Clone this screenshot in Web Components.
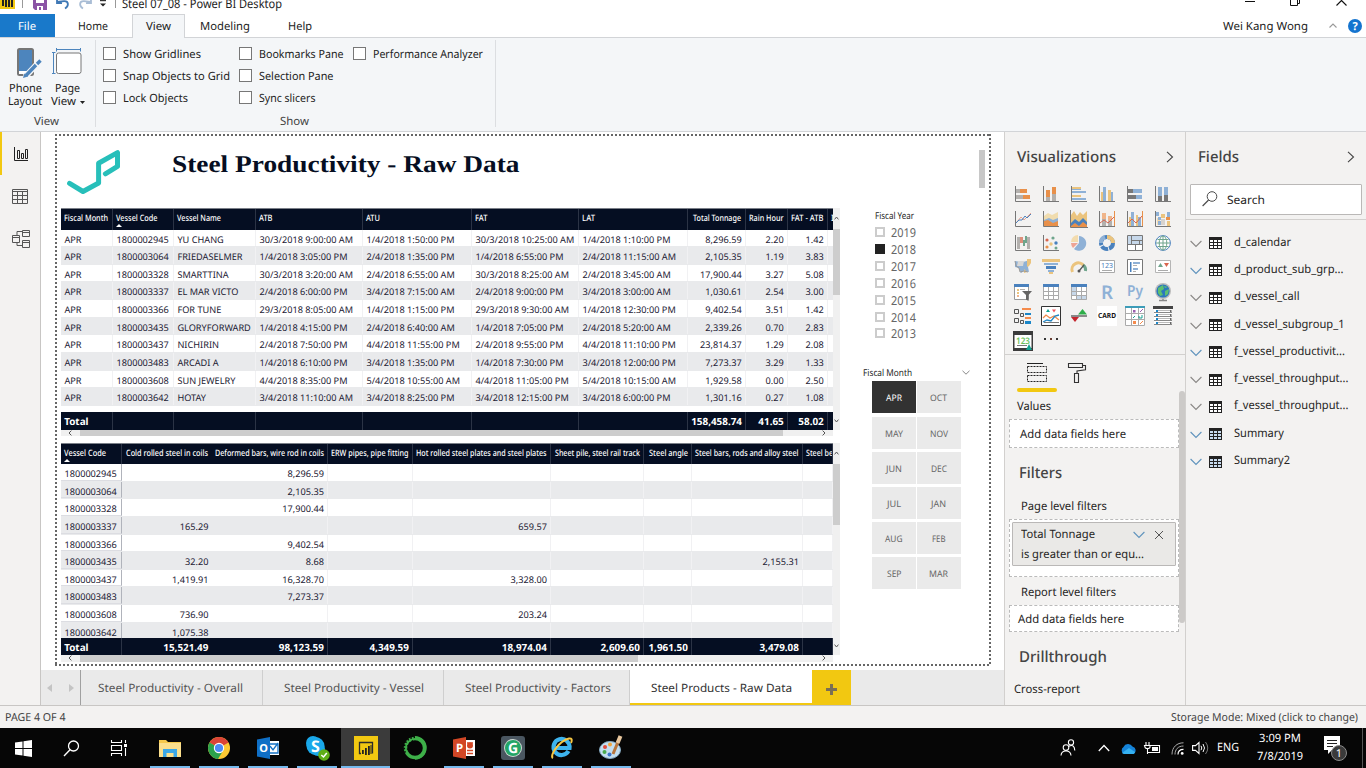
<!DOCTYPE html>
<html lang="en">
<head>
<meta charset="utf-8">
<title>Steel 07_08 - Power BI Desktop</title>
<style>
html,body{margin:0;padding:0}
body{width:1366px;height:768px;overflow:hidden;background:#fff;font:11.3px/16px "Noto Sans","Open Sans",sans-serif;color:#252423;text-rendering:geometricPrecision}
</style>
</head>
<body>
<pbi-app></pbi-app>
<script>
const R=(x,y,w,h,f)=>`<rect x="${x}" y="${y}" width="${w}" height="${h}" fill="${f}"/>`;
const P=(d,s,w=1,f='none')=>`<path d="${d}" stroke="${s}" stroke-width="${w}" fill="${f}"/>`;
const C=(x,y,r,f)=>`<circle cx="${x}" cy="${y}" r="${r}" fill="${f}"/>`;
const O='#e8904a',G='#b3b0ad',B='#8fb1d6',Y='#ebc47e',K='#777',D='#4a81bd';
const AX=P('M.5 0V15.5H16',K);
const ICONS={
 stackBar:[16,16,AX+R(1,3,4,4,G)+R(5,3,7,4,O)+R(1,9,7,4,G)+R(8,9,7,4,O)],
 stackCol:[16,16,AX+R(3,11,4,4,G)+R(3,4,4,7,O)+R(9,8,4,7,G)+R(9,1,4,7,O)],
 clusBar:[16,16,AX+R(1,1,9,2,Y)+R(1,3,9,1,B)+R(1,5,14,2,B)+R(1,9,9,2,Y)+R(1,12,14,2,B)],
 clusCol:[16,16,AX+R(2,6,2,9,Y)+R(4,1,3,14,B)+R(9,4,3,11,Y)+R(12,6,2,9,B)],
 hundBar:[16,16,AX+R(1,3,5,4,K)+R(6,3,9,4,B)+R(1,9,8,4,K)+R(9,9,6,4,B)],
 hundCol:[16,16,AX+R(3,1,4,9,B)+R(3,10,4,5,K)+R(9,1,4,8,B)+R(9,9,4,6,K)],
 line:[16,16,AX+P('M1 12L6 6L9 9L16 2','#e9a48f')+P('M1 12L4 9L7 9L10 5L12 7L16 3',D)],
 area:[16,16,`<path d="M1 5L5 2L9 4L15 1V15H1Z" fill="#f0dcae"/><path d="M1 9L6 7L10 9L15 7V15H1Z" fill="${B}"/><path d="M1 10L5 9L10 12L15 10V15H1Z" fill="${O}"/>`+AX],
 stackArea:[18,18,`<path d="M1 5L4 1L7 6L10 2L13 5L17 1V17H1Z" fill="${Y}"/><path d="M1 13L5 9L9 12L13 8L17 12V17H1Z" fill="${D}"/><path d="M1 16L5 13L9 16L13 12L17 15V17H1Z" fill="${O}"/>`+P('M.5 0V17.5H18',K)],
 lineStack:[16,16,AX+R(3,2,4,6,'#f0b58a')+R(3,8,4,7,G)+R(9,5,4,5,'#f0b58a')+R(9,10,4,5,G)+P('M1 12L5 9L9 12L15 6','#d9664f')+P('M15.5 0V15',O)],
 lineClus:[16,16,AX+R(2,6,2,9,Y)+R(4,1,3,14,B)+R(9,4,2,11,Y)+R(11,6,3,9,B)+P('M1 12L5 8L9 12L15 5','#d9664f')+P('M15.5 0V15',O)],
 ribbon:[16,16,AX+R(1,1,3,4,B)+R(6,3,4,4,Y)+R(12,1,3,5,B)+R(2,7,3,7,'#f2d9ae')+R(11,6,4,3,O)+R(6,8,4,6,'#d8d3cd')+R(3,6,3,3,B)+R(12,10,3,5,Y)+R(3,10,3,4,B)],
 waterfall:[16,16,AX+R(2,2,3,12,G)+R(5,2,3,6,'#dd8f7b')+R(8,5,2,6,'#6fa58c')+R(10,1,2,7,'#6fa58c')+R(12,2,3,12,G)],
 scatter:[16,16,AX+C(4,5,1.6,'#d9664f')+C(10,3,1.6,'#6fa58c')+C(8,9,1.7,Y)+C(13,8,1.7,D)+C(4,12,1.6,O)+C(13,13,1.5,'#6fa58c')],
 pie:[16,16,`<path d="M8 1A7.4 7.4 0 1 1 3 14L8 8Z" fill="${B}"/><path d="M7 0V7H0A7 7 0 0 1 7 0Z" fill="#f3dcae"/><path d="M0 8H7L2 13A8 8 0 0 1 0 8Z" fill="#eda495"/>`],
 donut:[16,16,`<circle cx="8" cy="8" r="6" fill="none" stroke="${D}" stroke-width="4" stroke-dasharray="7 1"/>`+P('M8 2A6 6 0 0 1 14 8',Y,4)+P('M2 8A6 6 0 0 1 6 2',B,4)],
 treemap:[16,16,R(.5,.5,15,15,'#fff')+R(1,1,14,8,'#c7d8ea')+P('M.5 .5H15.5V15.5H.5ZM.5 9.5H15.5M8.5 9.5V15.5M4.5 1V9M4.5 5.5H15M12.5 5.5V9',K)],
 globe:[16,16,`<circle cx="8" cy="8" r="7.4" fill="#fff" stroke="${D}"/>`+P('M8 1V15M1 8H15M2.5 4.5H13.5M2.5 11.5H13.5','#6fa58c')+`<ellipse cx="8" cy="8" rx="3.8" ry="7" fill="none" stroke="#6fa58c"/>`],
 filled:[18,16,`<path d="M1 2L9 3L16 1L14 8L15 13L10 12L7 14L5 9L1 8Z" fill="${B}"/><path d="M4 2h6l-1 5H3z" fill="#d8d8d8"/><path d="M13 0h4v4l-2 3-2 1zM10 10l3 3-3 1z" fill="${Y}"/>`+P('M1 2L2 7L5 9L6 13L10 12L14 13','#999')],
 funnel:[18,16,R(0,0,18,3,Y)+R(2,4,14,2,B)+R(4,7,10,3,D)+R(6,11,6,2,B)+R(7,13,4,2,Y)],
 gauge:[16,16,P('M1.5 13A6.5 6.5 0 0 1 13 7',Y,3)+P('M12 6A6 6 0 0 1 14.5 12','#6fa58c',3)+P('M8 12L13 6','#555',1.2)+C(8,12,1.5,'#555')],
 card123:[16,14,P('M.5 .5H15.5V12.5H.5Z','#a9a9a9',1,'#fff')+`<text x="8" y="8" font-size="7" text-anchor="middle" fill="${D}">123</text>`+P('M3 10.5H13','#aaa')],
 multi:[16,16,P('M.5 .5H15.5V15.5H.5Z',K,1,'#fff')+R(3,3,1.5,10,D)+R(6,3,7,2,B)+R(6,6,4,1,G)+R(6,9,5,2,B)+R(6,12,3,1,G)],
 kpi:[16,14,P('M.5 .5H15.5V12.5H.5Z','#b5b5b5',1,'#fff')+`<path d="M3 7L5.5 3L8 7Z" fill="#6fa58c"/><path d="M9 3H14L11.5 7Z" fill="#d9664f"/>`+P('M3 10.5H13','#aaa')],
 slicer:[18,18,R(0,2,15,15,'#fff')+P('M.5 2.5H14.5V16.5H.5Z','#999')+R(0,1,15,3,D)+R(3,6,2,2,Y)+R(3,9,2,2,Y)+R(3,12,2,2,'#f1b58c')+R(6,6,5,1,G)+`<path d="M8 8H18L14.5 12V18L12 16.5V12Z" fill="#666"/>`],
 table:[16,16,R(0,0,16,16,'#fff')+P('M.5 .5H15.5V15.5H.5ZM5.5 3V16M10.5 3V16M0 7.5H16M0 11.5H16','#aaa')+R(0,0,16,3,D)],
 matrix:[16,16,R(0,0,16,16,'#fff')+R(0,3,5,9,'#c7d8ea')+R(5,11,11,5,'#c7d8ea')+P('M.5 .5H15.5V15.5H.5ZM5.5 3V16M10.5 3V16M0 7.5H16M0 11.5H16','#aaa')+R(0,0,16,3,D)],
 rlang:[16,18,`<text x="8" y="15.5" font-size="19" font-weight="600" text-anchor="middle" textLength="12" lengthAdjust="spacingAndGlyphs" fill="${B}">R</text>`],
 py:[18,18,`<text x="9" y="13" font-size="15" font-weight="600" text-anchor="middle" textLength="16" lengthAdjust="spacingAndGlyphs" fill="${B}">Py</text>`],
 arcgis:[18,18,C(9,8,8,'#bbb')+C(9,8,6.6,'#2b78bd')+`<path d="M4 5L9 2L10 6L7 8L9 12L6 13L4 10ZM11 8L15 6L14 11L11 13ZM10 3L14 4L11 5Z" fill="#5cc070"/>`+P('M5 17.5H13M9 16V18','#888',1.5)],
 hier:[18,18,P('M.5 2.5H4.5V6.5H.5ZM6.5 6.5H9.5V9.5H6.5ZM.5 11.5H4.5V15.5H.5ZM6.5 13.5H9.5V16.5H6.5Z','#555')+R(8,1,9,2,'#f58b4c')+R(11,6,6,2,'#1a86c8')+R(11,10,6,2,'#f58b4c')+R(11,14,6,3,'#1a86c8')],
 spark:[20,20,P('M.5 .5H19.5V19.5H.5Z','#333',1,'#fff')+`<path d="M5 6L7 3L9 6Z" fill="#12a594"/><path d="M11 3.5H15L13 6.5Z" fill="#f2545b"/>`+P('M2 12L5 9L9 12L13 10L18 14','#f08a4b',1.2)+P('M2 16L6 14L10 15L14 10L18 9','#2186c4',1.3)+P('M3 16.5H18','#777')],
 updown:[18,14,`<path d="M8 5.5L12.5 0L17 5.5Z" fill="#2fae4a"/><path d="M1 8H9L5 13Z" fill="#c4262e"/>`+P('M1 7H17','#8a8a8a',2)],
 cardv:[20,20,R(0,0,20,20,'#fff')+`<text x="10" y="12.4" font-size="7" font-weight="700" text-anchor="middle" textLength="18" lengthAdjust="spacingAndGlyphs" fill="#111">CARD</text>`],
 gridv:[20,20,R(0,0,20,20,'#fff')+P('M.5 1V19.5H19.5V1M6.5 2V19M13.5 2V19M1 7.5H19M1 13.5H19','#aaa')+R(0,0,20,2,'#3c9cb8')+R(8,4,2.5,2.5,'#9b5fb0')+R(8,15,3,3,'#f58b4c')+P('M15 6L18 3','#9b5fb0')+P('M15 18L18 15','#f58b4c')+P('M8 12L10 10M14 10v2h3v-3','#17a091')],
 rowsv:[20,20,R(1,2,18,17,'#fff')+R(0,0,20,3,'#444')+[4,8,12,16].map(y=>P(`M1 ${y+2.5}H19`,'#888')+R(4,y,14,1,'#bbb')+R(3,y,2,2,'#1a86c8')+R(17,y,1.5,2,'#666')).join('')],
 num:[20,20,R(0,0,20,20,'#3b3b3b')+R(1.5,4,17,13,'#fff')+`<text x="10" y="12.5" font-size="9" font-weight="600" text-anchor="middle" textLength="14" lengthAdjust="spacingAndGlyphs" fill="#6abf5c">123</text>`+P('M4 14.5H14','#777')+`<path d="M13 19L16 13L19 19Z" fill="#14a08f"/>`],
 more:[16,8,R(1,1,2,2,'#333')+R(7,1,2,2,'#6b3f33')+R(13,1,2,2,'#333')],
 chevR:[8,12,P('M1 .8L6.5 6L1 11.2','#444',1.1)],
 chevD:[12,8,P('M.6 1L6 6.5L11.4 1','#8a8886',1.1)],
 chevB:[12,8,P('M.6 1L6 6.5L11.4 1','#5f93bd',1.1)],
 x:[10,10,P('M1 1L9 9M9 1L1 9','#555',1)],
 fieldsTab:[21,20,P('M0 .5H16','#222')+`<path d="M.5 3.5H19.5V9.5H.5ZM.5 12.5H19.5V18.5H.5Z" fill="none" stroke="#222" stroke-dasharray="2 1"/>`],
 roller:[19,21,P('M.5 .5H14.5V4.5H.5ZM14.5 2.5H17.5V6.8L9 8V10M6.5 10.5H10.5V19.5H6.5Z','#333',1.1)],
 search:[16,16,`<circle cx="10" cy="5.5" r="4.8" fill="none" stroke="#4a4a4a"/>`+P('M6.6 9L.6 15','#4a4a4a',1.1)],
 tbl:[13,13,R(0,1,13,12,'#222')+[1,5,9].map(x=>[4,7,10].map(y=>R(x,y,3,2,'#fff')).join('')).join('')],
 tblB:[13,13,R(0,1,13,12,'#222')+[1,5,9].map(x=>[4,7,10].map(y=>R(x,y,3,2,'#c9dcf0')).join('')).join('')],
 report:[15,15,P('M.5 0V13.5H14M3.5 3.5H5.5V11.5H3.5ZM7.5 6.5H9.5V11.5H7.5ZM11.5 2.5H13.5V11.5H11.5Z','#222')],
 data:[16,15,P('M.5 .5H15.5V14.5H.5ZM.5 2.5H15M.5 6.5H15M.5 10.5H15M5.5 3V14M10.5 3V14','#555')],
 model:[18,18,P('M.5 5.5H7.5V12.5H.5ZM.5 7.5H7M10.5 .5H17.5V6.5H10.5ZM10.5 2.5H17M10.5 10.5H17.5V17.5H10.5ZM10.5 12.5H17M5 5V1.5H10M5 13V15.5H10','#555')],
 phone:[26,30,`<rect x="2" y="1" width="15" height="26" rx="1.5" fill="#4d85bd" stroke="#767676" stroke-width="2"/>`+R(3,23,13,3,'#fff')+P('M9 29L22 15','#f4f6f8',6)+P('M10 27.5L20 17','#4d85bd',3.4)+P('M21 16L24.5 12.5','#4d85bd',3.4)+`<path d="M7 30L8.4 25.5L12 28.5Z" fill="#4d85bd"/>`],
 page:[30,27,P('M4.5 1.5H28.5M4.5 0V3.5M28.5 0V3.5M1.5 4.5V25.5M0 4.5H3.5M0 25.5H3.5','#4d85bd')+`<rect x="4.5" y="5" width="24.5" height="20.5" rx="2" fill="#fff" stroke="#767676"/>`],
 logo:[54,46,`<path d="M2.6 34.4L16 42.5L31.6 34V14.2L50.5 3.6V17.4L38.4 24.8" fill="none" stroke="#27bfba" stroke-width="5" stroke-linecap="round" stroke-linejoin="round"/>`],
 win:[17,17,`<path d="M0 2.5L7.5 1.5V8H0ZM8.5 1.3L17 0V8H8.5ZM0 9H7.5V15.5L0 14.5ZM8.5 9H17V17L8.5 15.7Z" fill="#fff"/>`],
 tsearch:[17,17,`<circle cx="10.5" cy="6" r="5" fill="none" stroke="#fff" stroke-width="1.3"/>`+P('M7 9.7L1 16','#fff',1.4)],
 taskview:[16,16,P('M.5 0V2.5H10.5V0M.5 16V13.5H10.5V16M.5 5.5H10.5V10.5H.5ZM14.5 0V3M14.5 8V16','#fff',1.1)+R(13,4,3,3,'#fff')],
 explorer:[22,18,`<path d="M0 1H7L9 3H22V18H0Z" fill="#f5c84c"/>`+R(0,4,22,14,'#fbdf8c')+`<path d="M4 18V10H18V18H14.5V14H7.5V18Z" fill="#3ba7e6"/>`],
 chrome:[22,22,C(11,11,11,'#fcc934')+`<path d="M11 11L1.5 5.5A11 11 0 0 1 20.5 5.5Z" fill="#db4437"/><path d="M11 11L1.5 5.5A11 11 0 0 0 10 22L15.5 13Z" fill="#2ba24c"/><path d="M11 5.5H20.5L19 4Z" fill="#db4437"/>`+C(11,11,5.2,'#fff')+C(11,11,4.1,'#4c8bf5')],
 outlook:[22,22,R(11,4,11,14,'#fff')+P('M12 7H21V16H12ZM13 9L16 13L21 6','#1572c4',1.3)+`<path d="M0 2.5L13 0V22L0 19.5Z" fill="#0f6fc6"/><text x="6.5" y="15" font-size="11" font-weight="700" text-anchor="middle" fill="#fff">O</text>`],
 skype:[24,26,C(8,8,7,'#1aa8ea')+C(13,14,7,'#1aa8ea')+C(10.5,11,9,'#1aa8ea')+`<text x="10.5" y="16.7" font-size="16" font-weight="700" text-anchor="middle" fill="#fff">S</text>`+C(19,20,5.8,'#5fae16')+P('M16.3 20L18.5 22L21.8 18','#fff',1.5)],
 pbi:[24,24,R(0,0,24,24,'#f2c811')+P('M7 17.5H5.5V6.5H18.5V17.5','#2b2b2b',1.3)+R(8,14,1.8,4,'#222')+R(11,12,1.8,7,'#222')+R(14,10,1.8,9,'#222')+R(16.5,9,1,9,'#222')],
 anaconda:[24,24,`<circle cx="12" cy="12" r="9.5" fill="none" stroke="#3eb049" stroke-width="3.4"/><path d="M12 1.3A10.7 10.7 0 0 0 2.5 17" fill="none" stroke="#060606" stroke-width="1.6" stroke-dasharray="1.5 1.8"/><path d="M10 4.5A8 8 0 0 0 4.5 14" fill="none" stroke="#060606" stroke-width="1" stroke-dasharray="1.5 2"/>`+P('M12 .8A11 11 0 0 1 23 12A11 11 0 0 1 12 23','#3eb049',1.4)],
 ppt:[22,22,R(10,3,12,16,'#fff')+P('M14 6H20M14 13.5H20M14 16.5H20','#d24726',1.3)+C(17,8.5,3,'#d24726')+`<path d="M0 2.5L13 0V22L0 19.5Z" fill="#d24726"/><text x="6.5" y="15.3" font-size="11.5" font-weight="700" text-anchor="middle" fill="#fff">P</text>`],
 gram:[24,24,`<rect width="24" height="24" rx="3" fill="#4a5660"/>`+C(12,12,9,'#cfd8d3')+C(12,12,8,'#23a566')+`<text x="12" y="17" font-size="14" font-weight="700" text-anchor="middle" fill="#fff">G</text>`],
 ie:[24,24,P('M18.5 15A8 8 0 1 1 19.5 12H6','#3db4ee',4.2)+P('M3 22C-1 20 9 5 19 2.5C22.5 1.8 22 5 21 7','#f6c744',2)],
 paint:[24,26,`<ellipse cx="11" cy="15" rx="10.5" ry="8.5" fill="#c4dff0" stroke="#86aac2"/>`+C(6,12,2,'#e14b3c')+C(11,9.5,2,'#f2a53c')+C(5.5,17,2,'#4aab4c')+C(10.5,19.5,2,'#3c75c9')+P('M14 19L19 7','#b9763d',3)+P('M18.6 8L21.5 1','#e8c79e',4)],
 people:[16,18,`<circle cx="11" cy="3.4" r="2.6" fill="none" stroke="#fff" stroke-width="1.1"/><circle cx="6" cy="8.6" r="2.8" fill="none" stroke="#fff" stroke-width="1.1"/>`+P('M1 16.5C1.5 10.5 10.5 10.5 11 16.5M9 7.2C13 5 14.5 8 14.8 11.5','#fff',1.1)],
 up:[12,8,P('M.8 7L6 1.5L11.2 7','#fff',1.3)],
 cloud:[17,11,`<path d="M4 11A4 4 0 0 1 3.5 4A5 5 0 0 1 12.5 3.5A4 4 0 0 1 13.5 11Z" fill="#1583d8"/><path d="M2 10L9 5L15 9A2 2 0 0 1 13.5 11H4Z" fill="#35b1f1"/>`],
 batt:[17,12,P('M6.5 3.5H15.5V10.5H4M2 0V3M5 0V3M.5 3.5H6V5C6 7 1 7 1 5ZM3.5 7V12','#fff',1.1)+R(8,5,6,4,'#fff')],
 wifi:[13,13,P('M1 12.5C1 5 6 .8 12.5 .8M4 12.5C4 7.5 7 4 12.5 4','#aaa')+P('M7 12.5C7 9.5 9 7.3 12.5 7.3','#fff',1.2)+C(11.2,11.4,1.4,'#fff')],
 vol:[17,14,P('M.6 4.6H3.5L7 1.5V12.5L3.5 9.4H.6Z','#fff',1.1)+P('M9 4.8Q10.6 7 9 9.2M11 3Q14 7 11 11','#fff')+P('M13.5 1Q18 7 13.5 13','#777')],
 note:[25,25,`<path d="M1 0H17V14H9L5 18V14H1Z" fill="#fff"/>`+P('M4 4.5H14M4 7.5H14M4 10.5H10','#222')+`<circle cx="16" cy="17" r="7.5" fill="#3a3a3a" stroke="#8a8a8a"/><text x="16" y="21" font-size="11" text-anchor="middle" fill="#fff">1</text>`],
 save:[14,10,`<path d="M0 -3H14V10H2L0 8Z" fill="#8b53a5"/>`+R(3,-3,8,6,'#fff')+R(4,6,6,4,'#fff')+R(6,7,2,3,'#8b53a5')],
 undo:[14,9,P('M1 2L8 1.2C13 1 13 6 9 8.4M1 -2V3.2H6','#3f78b5',1.8)],
 redo:[14,9,P('M13 2L6 1.2C1 1 1 6 5 8.4M13 -2V3.2H8','#a9bdd5',1.8)],
 down:[8,7,R(1,0,6,1.2,'#333')+`<path d="M1 3.5H7L4 6.5Z" fill="#222"/>`],
 caret:[5,3,`<path d="M0 0H5L2.5 3Z" fill="#222"/>`],
 help:[14,14,C(7,7,7,'#1474cf')+`<text x="7" y="11" font-size="11" font-weight="700" text-anchor="middle" fill="#fff">?</text>`],
 upS:[8,5,P('M.5 4.5L4 1L7.5 4.5','#999',1.1)],
 min:[10,4,P('M0 .5H10','#111')],
 max:[11,6,P('M.5 0V5.5H7.5V0M9.5 0V3.5H8','#111')],
 close:[11,6,P('M5.5 .5L.5 5.5M5.5 .5L10.5 5.5','#111',1.1)],
 sL:[4,6,P('M3.4 .6L1 3L3.4 5.4','#555')],sR:[4,6,P('M.6 .6L3 3L.6 5.4','#555')],
 sU:[5,4,P('M.6 3.4L2.5 1L4.4 3.4','#555')],sD:[5,4,P('M.6 .6L2.5 3L4.4 .6','#555')],
 pL:[5,8,`<path d="M5 0V8L0 4Z" fill="#c4c4c4"/>`],pR:[5,8,`<path d="M0 0V8L5 4Z" fill="#c4c4c4"/>`],
 chevS:[8,5,P('M.5 .8L4 4.2L7.5 .8','#888')],
 plus:[11,11,P('M5.5 0V11M0 5.5H11','#7a6f55',3)]
};
class UiIcon extends HTMLElement{connectedCallback(){
 if(this.shadowRoot)return;const [w,h,s]=ICONS[this.getAttribute('name')];
 this.attachShadow({mode:'open'}).innerHTML=`<style>:host{display:inline-block;flex:none;width:${w}px;height:${h}px}svg{display:block;overflow:visible}</style><svg width="${w}" height="${h}" viewBox="0 0 ${w} ${h}">${s}</svg>`}}
/* Text run condensed or expanded to the width given by w; --dy nudges its baseline */
class FitText extends HTMLElement{connectedCallback(){
 if(this.shadowRoot)return;const w=+this.getAttribute('w');
 this.attachShadow({mode:'open'}).innerHTML=`<style>:host{display:block;flex:none;width:${w}px;white-space:pre}span{display:inline-block;transform-origin:0 50%}</style><span><slot></slot></span>`;
 const s=this.shadowRoot.querySelector('span');s.style.transform=`translateY(var(--dy,1px)) scaleX(${w/s.getBoundingClientRect().width})`}}
const def=(n,css,html)=>customElements.define(n,class extends HTMLElement{connectedCallback(){
 if(this.shadowRoot)return;this.attachShadow({mode:'open'}).innerHTML=`<style>*{box-sizing:border-box}${css}</style>`+(typeof html==='function'?html(this):html)}});
const T=(w,t,c='')=>`<fit-text w="${w}" class="${c}">${t}</fit-text>`;
const I=(n,c='')=>`<ui-icon name="${n}" class="${c}"></ui-icon>`;

def('title-bar',`:host{display:flex;height:14px;overflow:hidden;align-items:flex-start;color:#222}
.pb{width:15px;height:9px;background:#f2c811;display:flex;align-items:flex-start;gap:1px;padding-left:2px}.pb i{width:2px;background:#222}
.sep{width:1px;height:8px;background:#999;flex:none}.t{margin:-5px 0 0 6px;font-size:12px}.sp{flex:1}
ui-icon[name=save]{margin-left:10px}ui-icon[name=undo]{margin-left:9px}ui-icon[name=redo]{margin-left:8px}ui-icon[name=down]{margin-left:7px}ui-icon[name=min]{margin:1px 35px 0 0}ui-icon[name=max]{margin-right:35px}ui-icon[name=close]{margin-right:19px}`,
`<div class="pb"><i style="height:6px"></i><i style="height:7px"></i><i style="height:7px"></i><i style="height:7px"></i></div><div class="sep" style="margin-left:7px"></div>${I('save')}${I('undo')}${I('redo')}${I('down')}<div class="sep" style="margin-left:8px"></div>${T(160,'Steel 07_08 - Power BI Desktop','t')}<div class="sp"></div>${I('min')}${I('max')}${I('close')}`);

def('menu-bar',`:host{display:flex;height:24px;border-bottom:1px solid #d2d4d7;color:#222;line-height:24px;box-sizing:border-box}
.f{width:55px;height:23px;background:#1979ca;color:#fff;padding-left:18px}.h{margin:0 24px 0 23px}
.v{width:53px;height:24px;border:1px solid #d2d4d7;border-bottom:0;background:#f4f6f8;padding-left:13px;line-height:22px}.m{margin-left:15px}.l{margin-left:38px}.sp{flex:1}
ui-icon{align-self:center}.u{margin-left:21px}.q{margin:0 4px 0 11px}`,
`<div class="f">${T(18,'File')}</div>${T(30,'Home','h')}<div class="v">${T(25,'View')}</div>${T(50,'Modeling','m')}${T(24,'Help','l')}<div class="sp"></div>${T(85,'Wei Kang Wong')}${I('upS','u')}${I('help','q')}`);

def('check-item',`:host{display:flex;gap:7px;height:22px;align-items:center;line-height:22px}i{width:13px;height:13px;border:1px solid #777;background:#fff;flex:none;margin-bottom:2px}`,()=>`<i></i><slot></slot>`);
const K2=(w,t)=>`<check-item>${T(w,t)}</check-item>`;
def('ribbon-bar',`:host{display:flex;height:94px;background:#f4f6f8;border-bottom:1px solid #d2d4d7;color:#222;box-sizing:border-box}
.g{border-right:1px solid #dcdee1;margin:2px 0 4px;height:87px;display:flex;flex-direction:column;align-items:center}
.a{width:96px}.b{width:400px;padding-left:7px;align-items:stretch}.bt{display:flex;height:73px;width:100%;--dy:.4px}
.c{display:flex;flex-direction:column;align-items:center;line-height:13px}.c .ic{height:41px;display:flex;align-items:flex-end;width:100%;justify-content:center;padding-bottom:3px;margin-bottom:1px}.r{display:flex;align-items:center;gap:4px;margin-left:0}.r ui-icon{margin-top:2px}.lab{line-height:18px;color:#444;--dy:4px}
.ck{display:flex;padding-top:3px;height:73px}.ck div:nth-child(1){width:136px}.ck div:nth-child(2){width:114px}`,
`<div class="g a"><div class="bt"><div class="c" style="width:50px"><div class="ic" style="padding-left:8px">${I('phone')}</div>${T(33,'Phone')}${T(34,'Layout')}</div><div class="c" style="width:35px"><div class="ic" style="padding:0 2px 6px 0">${I('page')}</div>${T(25,'Page')}<div class="r">${T(25,'View')}${I('caret')}</div></div></div><div class="lab" style="padding-right:2px">${T(25,'View')}</div></div>
<div class="g b"><div class="ck"><div>${K2(78,'Show Gridlines')}${K2(107,'Snap Objects to Grid')}${K2(65,'Lock Objects')}</div><div>${K2(84.5,'Bookmarks Pane')}${K2(74.5,'Selection Pane')}${K2(56.5,'Sync slicers')}</div><div>${K2(110,'Performance Analyzer')}</div></div><div class="lab" style="padding-left:177px">${T(29,'Show')}</div></div>`);

def('nav-rail',`:host{display:flex;flex-direction:column;background:#f3f2f1;border-right:1px solid #c8c6c4}
div{height:42.5px;display:flex;align-items:center;justify-content:center}.on{border-left:2px solid #f2c811;padding-top:2px}`,
`<div class="on">${I('report')}</div><div style="padding-top:2px">${I('data')}</div><div style="padding:2px 0 0 2px">${I('model')}</div>`);

const A=[['1800002945','YU CHANG','30/3/2018 9:00:00 AM','1/4/2018 1:50:00 PM','30/3/2018 10:25:00 AM','1/4/2018 1:10:00 PM','8,296.59','2.20','1.42'],
['1800003064','FRIEDASELMER','1/4/2018 3:05:00 PM','2/4/2018 1:35:00 PM','1/4/2018 6:55:00 PM','2/4/2018 11:15:00 AM','2,105.35','1.19','3.83'],
['1800003328','SMARTTINA','30/3/2018 3:20:00 AM','2/4/2018 6:55:00 AM','30/3/2018 8:25:00 AM','2/4/2018 3:45:00 AM','17,900.44','3.27','5.08'],
['1800003337','EL MAR VICTO','2/4/2018 6:00:00 PM','3/4/2018 7:15:00 AM','2/4/2018 9:00:00 PM','3/4/2018 3:00:00 AM','1,030.61','2.54','3.00'],
['1800003366','FOR TUNE','29/3/2018 8:05:00 AM','1/4/2018 1:15:00 PM','29/3/2018 9:30:00 AM','1/4/2018 12:30:00 PM','9,402.54','3.51','1.42'],
['1800003435','GLORYFORWARD','1/4/2018 4:15:00 PM','2/4/2018 6:40:00 AM','1/4/2018 7:05:00 PM','2/4/2018 5:20:00 AM','2,339.26','0.70','2.83'],
['1800003437','NICHIRIN','2/4/2018 7:50:00 PM','4/4/2018 11:55:00 PM','2/4/2018 9:55:00 PM','4/4/2018 11:10:00 PM','23,814.37','1.29','2.08'],
['1800003483','ARCADI A','1/4/2018 6:10:00 PM','3/4/2018 1:35:00 PM','1/4/2018 7:30:00 PM','3/4/2018 12:00:00 PM','7,273.37','3.29','1.33'],
['1800003608','SUN JEWELRY','4/4/2018 8:35:00 PM','5/4/2018 10:55:00 AM','4/4/2018 11:05:00 PM','5/4/2018 10:15:00 AM','1,929.58','0.00','2.50'],
['1800003642','HOTAY','3/4/2018 11:10:00 AM','3/4/2018 8:25:00 PM','3/4/2018 12:15:00 PM','3/4/2018 6:00:00 PM','1,301.16','0.27','1.08']].map(r=>['APR',...r,'']);
const e='';
const TABLES={
 vessels:{cols:[52,61,82,107,109,107,109,58,42,40,5],num:7,head:[[44,'Fiscal Month'],[41.5,'Vessel Code'],[44,'Vessel Name'],[13.5,'ATB'],[14,'ATU'],[12.5,'FAT'],[13,'LAT'],[48,'Total Tonnage'],[34.5,'Rain Hour'],[32.5,'FAT - ATB'],[3,'I']],rows:A,total:['Total',e,e,e,e,e,e,'158,458.74','41.65','58.02',e],body:182.5,sort:1,thumb:66,hth:703},
 products:{cols:[60.5,90.5,115.5,85,138,93,48,111,30.5],num:1,head:[[42,'Vessel Code'],[82,'Cold rolled steel in coils'],[109,'Deformed bars, wire rod in coils'],[77.5,'ERW pipes, pipe fitting'],[130.5,'Hot rolled steel plates and steel plates'],[85,'Sheet pile, steel rail track'],[39,'Steel angle'],[103.5,'Steel bars, rods and alloy steel'],[27,'Steel be']],
 rows:[['1800002945',e,'8,296.59',e,e,e,e,e,e],['1800003064',e,'2,105.35',e,e,e,e,e,e],['1800003328',e,'17,900.44',e,e,e,e,e,e],['1800003337','165.29',e,e,'659.57',e,e,e,e],['1800003366',e,'9,402.54',e,e,e,e,e,e],['1800003435','32.20','8.68',e,e,e,e,'2,155.31',e],['1800003437','1,419.91','16,328.70',e,'3,328.00',e,e,e,e],['1800003483',e,'7,273.37',e,e,e,e,e,e],['1800003608','736.90',e,e,'203.24',e,e,e,e],['1800003642','1,075.38',e,e,e,e,e,e,e]],
 total:['Total','15,521.49','98,123.59','4,349.59','18,974.04','2,609.60','1,961.50','3,479.08',e],body:173.5,sort:0,thumb:61,hth:558}};
def('data-table',`:host{display:grid;grid-template-columns:772px 7px;width:779px;font-size:9.18px;color:#1c2033;--p:3.3px;--hp:4px}:host([kind=products]){--p:2.6px;--hp:3px}
.main{overflow:hidden}.row{display:grid;height:17.65px;line-height:19.6px;border-bottom:1px solid #e9eaec}.row:nth-child(even){background:#e9eaec}
.row div{padding:0 var(--p) 0 3.4px;border-right:1px solid #f1f1f3;white-space:nowrap;overflow:hidden}.n{text-align:right}
.head,.tot{display:grid;background:#050e22;color:#fff;overflow:hidden}.head{height:21.5px;border-top:1px solid #7a7f88;font-size:8.8px;line-height:17px;font-weight:500}
.head>div,.tot>div{border-right:1px solid #2b3345;padding:0 var(--p) 0 3.2px;overflow:hidden;white-space:nowrap}.head .n{display:flex;justify-content:flex-end;padding-right:var(--hp)}.head .n:last-child{justify-content:flex-start}
.tot{height:17.5px;line-height:18.6px;font-weight:700;font-size:9.9px}.body{overflow:hidden}.head u{display:block;width:0;height:0;border:3px solid transparent;border-top:0;border-bottom:3px solid #fff;margin:-2px 0 0 0}
.hs{height:6.5px;display:flex;background:#f0f0f0;align-items:center;padding:0 7px}.hs b{height:100%;background:#cdcdcd;margin-left:8px;margin-right:auto}
.vs{display:flex;flex-direction:column;align-items:center;background:#f0f0f0;height:calc(100% - 6.5px)}.vs b{width:100%;background:#cdcdcd}.vs .u,.vs .d{height:21px;padding-top:8px;display:flex}.vs .d{padding-top:10px}.vs .s{flex:1}
:host([kind=products]) .row div:first-child{border-right:1px solid #b0b3bb;border-bottom:1px solid #dcdde2}
:host([kind=products]) .row div:nth-child(2),:host([kind=products]) .head>div:nth-child(2),:host([kind=products]) .tot>div:nth-child(2){border-right-color:transparent}`,
h=>{const t=TABLES[h.getAttribute('kind')],g=`style="grid-template-columns:${t.cols.map(c=>c+'px').join(' ')}"`,n=i=>i>=t.num?'n':'';
return `<div class="main"><div class="head" ${g}>${t.head.map((c,i)=>`<div class="${n(i)}">${T(c[0],c[1])}${i==t.sort?'<u></u>':''}</div>`).join('')}</div><div class="body" style="height:${t.body}px">${t.rows.map(r=>`<div class="row" ${g}>${r.map((c,i)=>`<div class="${n(i)}">${c}</div>`).join('')}</div>`).join('')}</div><div class="tot" ${g}>${t.total.map((c,i)=>`<div class="${n(i)}">${c}</div>`).join('')}</div><div class="hs">${I('sL')}<b style="width:${t.hth}px"></b>${I('sR')}</div></div><div class="vs"><div class="u">${I('sU')}</div><b style="height:${t.thumb}px"></b><div class="s"></div><div class="d">${I('sD')}</div></div>`});

def('year-slicer',`:host{display:block}.y{display:flex;align-items:center;gap:6px;height:16.85px;font-size:12.3px;color:#666}.y i{width:10px;height:10px;border:2px solid #ccc;background:#fff}.y.on i{background:#222;border-color:#222}.t{font-size:9.5px;color:#222;height:16px;--dy:.3px}`,
`<div class="t">${T(39,'Fiscal Year')}</div>`+[2019,2018,2017,2016,2015,2014,2013].map(y=>`<div class="y ${y==2018?'on':''}"><i></i>${T(25,y)}</div>`).join(''));
def('month-slicer',`:host{display:block;width:107px}.t{display:flex;justify-content:space-between;align-items:center;font-size:9.5px;color:#222;height:16px}
.g{display:grid;grid-template-columns:43.5px 43.5px;gap:3.2px 1.5px;grid-auto-rows:32px;padding:1px 0 0 9px;font-size:9px;color:#666;--dy:.5px}.g div{background:#eaeaea;display:flex;align-items:center;justify-content:center}.g .on{background:#323232;color:#fff}`,
`<div class="t">${T(49,'Fiscal Month')}${I('chevS')}</div><div class="g">${[[16,'APR'],[17,'OCT'],[18,'MAY'],[18,'NOV'],[16,'JUN'],[16,'DEC'],[14,'JUL'],[15,'JAN'],[17.5,'AUG'],[13.5,'FEB'],[14.5,'SEP'],[19,'MAR']].map(([w,m],i)=>`<div class="${i?'':'on'}">${T(w,m)}</div>`).join('')}</div>`);

def('report-canvas',`:host{display:block;height:538px;padding:2px 14px 0;box-sizing:border-box}
.pg{width:936px;height:532px;padding:2px;background:repeating-linear-gradient(90deg,#666 0 2px,transparent 2px 4px) 0 0/100% 2px no-repeat,repeating-linear-gradient(90deg,#666 0 2px,transparent 2px 4px) 0 100%/100% 2px no-repeat,repeating-linear-gradient(#666 0 2px,transparent 2px 4px) 0 0/2px 100% no-repeat,repeating-linear-gradient(#666 0 2px,transparent 2px 4px) 100% 0/2px 100% no-repeat}
.top{display:flex;height:72px;padding:13px 4px 0 10px}.top .t{font:700 24px/30px "Liberation Serif",serif;color:#060e22;margin:0 0 0 51px}.top i{margin-left:auto;width:6px;height:38px;background:#c8c8c8;margin-top:1px}
.m{display:flex;padding-left:4px}.tb{display:flex;flex-direction:column;gap:6.5px}.s{padding-left:23px}year-slicer{margin-left:12px}month-slicer{margin-top:22.5px}`,
`<div class="pg"><div class="top">${I('logo')}${T(347.5,'Steel Productivity - Raw Data','t')}<i></i></div><div class="m"><div class="tb"><data-table kind="vessels"></data-table><data-table kind="products"></data-table></div><div class="s"><year-slicer></year-slicer><month-slicer></month-slicer></div></div></div>`);

def('page-tabs',`:host{display:flex;height:35px;background:#eaeaea;color:#555;font-size:11.5px;line-height:35px}
.ar{width:40px;display:flex;justify-content:space-between;align-items:center;padding:0 6px 0 6px;border-right:1px solid #a0a0a0}.tab{display:flex;justify-content:center;border-right:1px solid #cfcfcf}.on{background:#fff;border:0;border-bottom:2px solid #f2c811;color:#333}.add{width:39px;background:#f2c811;display:flex;align-items:center;justify-content:center;padding-top:3px}`,
`<div class="ar">${I('pL')}${I('pR')}</div><div class="tab" style="width:182px;padding-right:2px">${T(145,'Steel Productivity - Overall')}</div><div class="tab" style="width:181px;padding-left:2px">${T(140,'Steel Productivity - Vessel')}</div><div class="tab" style="width:186px;padding-left:2px">${T(146,'Steel Productivity - Factors')}</div><div class="tab on" style="width:182px;padding-left:1px">${T(141,'Steel Products - Raw Data')}</div><div class="add">${I('plus')}</div>`);

const V=['stackBar','stackCol','clusBar','clusCol','hundBar','hundCol','line','area','stackArea','lineStack','lineClus','ribbon','waterfall','scatter','pie','donut','treemap','globe','filled','funnel','gauge','card123','multi','kpi','slicer','table','matrix','rlang','py','arcgis','hier','spark','updown','cardv','gridv','rowsv','num','more'];
def('viz-pane',`:host{display:block;background:#f3f2f1;border-left:1px solid #d2d0ce;border-right:1px solid #d2d0ce;color:#252423;font-size:11.6px}
.h{display:flex;height:50px;align-items:center;justify-content:space-between;padding:0 11px 0 12px}.b{font-size:15.2px;font-weight:500;color:#444;line-height:22px;--dy:.3px}
.g{display:grid;grid-template-columns:repeat(6,28px);grid-auto-rows:24.4px;place-items:center;padding-left:4px;height:172px}
.w{display:flex}.tabs{height:37px;border-top:1px solid #d2d0ce;padding:8px 0 0 22px;display:flex;gap:20px}.ul{width:40px;height:4px;border-radius:2px;background:#f2c811;margin:-3px 0 0 8px}
.c{width:174px;padding-left:4px}.sc{width:6px;height:232px;border-radius:3px;background:#cccac8}
.drop{border:1px dashed #bbb;background:#fff;width:170px}.p{padding-left:12px}
.card{background:#eae9e7;border:1px solid #bab8b7;border-radius:1px;height:44px;width:164px;margin:2px;padding:2px 11px 0 8px;line-height:19.5px;--dy:0px}.card div{display:flex;align-items:center}`,
`<div class="h">${T(99,'Visualizations','b')}${I('chevR')}</div><div class="g">${V.map(v=>I(v)).join('')}</div><div class="tabs">${I('fieldsTab')}${I('roller')}</div><div class="w"><div class="c"><div class="ul"></div>
<div style="padding:6px 0 0 8px;height:27px">${T(34,'Values')}</div><div class="drop" style="height:29px;padding-left:10px;line-height:28px">${T(106,'Add data fields here')}</div>
<div style="padding:14px 0 0 10px;height:50px" class="b">${T(43,'Filters')}</div><div class="p" style="height:21px">${T(86,'Page level filters')}</div>
<div class="drop" style="height:58px"><div class="card"><div>${T(74,'Total Tonnage')}<span style="flex:1"></span>${I('chevB')}<span style="width:9px"></span>${I('x')}</div>${T(123,'is greater than or equ...')}</div></div>
<div class="p" style="height:28px;padding-top:7px">${T(95,'Report level filters')}</div><div class="drop" style="height:27px;padding-left:8px;line-height:26px">${T(106,'Add data fields here')}</div>
<div style="padding:14px 0 0 10px;height:49px" class="b">${T(88,'Drillthrough')}</div><div style="padding-left:5px">${T(66,'Cross-report')}</div></div><div class="sc"></div></div>`);

def('field-row',`:host{display:flex;height:27.3px;align-items:center;padding-left:4px}.t{margin-left:12px;margin-top:-2px}.k{margin:2px 7px 0 0}`,h=>I(h.getAttribute('chev')||'chevD','k')+I(h.getAttribute('icon')||'tbl')+`<div class="t"><slot></slot></div>`);
const F=[[57,'d_calendar'],[109.5,'d_product_sub_grp...','chevB'],[65.5,'d_vessel_call'],[110.5,'d_vessel_subgroup_1'],[111,'f_vessel_productivit...','chevB'],[114.5,'f_vessel_throughput...'],[114.5,'f_vessel_throughput...'],[50,'Summary','chevB','tblB'],[56,'Summary2','chevB','tblB']];
def('fields-pane',`:host{display:block;background:#f3f2f1;font-size:11.6px;color:#252423}.h{display:flex;height:50px;align-items:center;justify-content:space-between;padding:0 11px 0 12px}.b{font-size:15.2px;font-weight:500;color:#444;--dy:.3px}
.s{margin:2px 4px 4px;height:31px;border:1px solid #bab8b7;background:#fff;border-radius:1px;display:flex;align-items:center;padding-left:11px;gap:9px}.s ui-icon{margin-bottom:1px}.l{border-top:1px solid #d2d0ce;padding-top:9px}`,
`<div class="h">${T(41,'Fields','b')}${I('chevR')}</div><div class="s">${I('search')}${T(38,'Search')}</div><div class="l">${F.map(f=>`<field-row chev="${f[2]||'chevD'}" icon="${f[3]||'tbl'}">${T(f[0],f[1])}</field-row>`).join('')}</div>`);

def('status-bar',`:host{display:flex;justify-content:space-between;height:23px;border-top:1px solid #c8c6c4;background:#f3f2f1;padding:0 8px 0 4.5px;line-height:22px;color:#444;font-size:11px;box-sizing:border-box}`,`${T(60.5,'PAGE 4 OF 4')}${T(187,'Storage Mode: Mixed (click to change)')}`);

def('task-app',`:host{display:flex;flex-direction:column;width:49px;height:40px;align-items:center;flex:none}.i{height:38px;padding-top:1px;display:flex;align-items:center}u{width:40px;height:2px}:host([run]) u{background:#76b9ed}:host([active]){background:#3b3b3b}:host([active]) u{width:49px}`,h=>`<div class="i">${I(h.getAttribute('icon'))}</div><u></u>`);
def('task-bar',`:host{display:flex;height:40px;background:#060606;color:#fff;font-size:11.4px;align-items:center;--dy:.3px}.c{display:flex;justify-content:center;flex:none}.sp{flex:1}.clk{width:48px;display:flex;flex-direction:column;align-items:center;line-height:18px}`,
`<div class="c" style="width:46px">${I('win')}</div><div class="c" style="width:50px">${I('tsearch')}</div><div class="c" style="width:49px;padding-right:4px">${I('taskview')}</div>${['explorer','chrome','outlook','skype','pbi','anaconda','ppt','gram','ie','paint'].map(n=>`<task-app icon="${n}" ${n=='anaconda'?'':'run'} ${n=='pbi'?'active':''}></task-app>`).join('')}<div class="sp"></div>
${[['people',44],['up',27],['cloud',22],['batt',27],['wifi',22],['vol',24]].map(([n,w])=>`<div class="c" style="width:${w}px">${I(n)}</div>`).join('')}<div class="c" style="width:32px">${T(22,'ENG')}</div><div style="width:12px"></div><div class="clk">${T(42,'3:09 PM')}${T(46,'7/8/2019')}</div><div style="width:19px"></div>${I('note')}<div style="width:14px"></div><div style="width:1px;height:40px;background:#555"></div><div style="width:3px"></div>`);

def('pbi-app',`:host{display:grid;grid-template-rows:14px 24px 94px 573px 23px 40px;width:1366px;height:768px}.m{display:grid;grid-template-columns:41px 963px 182px 180px;min-height:0}.m>*{min-height:0;min-width:0;box-sizing:border-box}`,
`<title-bar></title-bar><menu-bar></menu-bar><ribbon-bar></ribbon-bar><div class="m"><nav-rail></nav-rail><div><report-canvas></report-canvas><page-tabs></page-tabs></div><viz-pane></viz-pane><fields-pane></fields-pane></div><status-bar></status-bar><task-bar></task-bar>`);
customElements.define('ui-icon',UiIcon);
customElements.define('fit-text',FitText);
</script>
</body>
</html>
